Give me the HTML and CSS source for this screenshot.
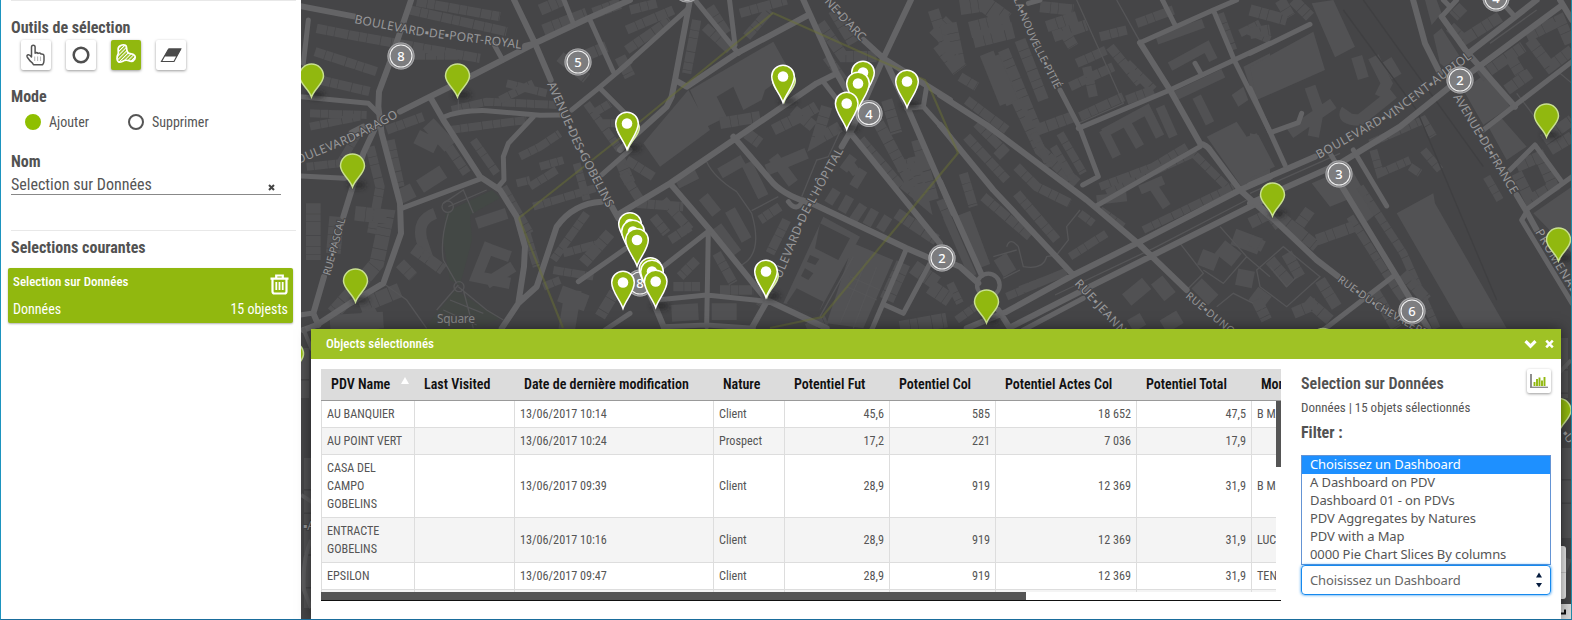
FILE: index.html
```
<!DOCTYPE html>
<html lang="fr">
<head>
<meta charset="utf-8">
<title>Selection sur Données</title>
<link rel="stylesheet" href="styles.css">
</head>
<body>
<div class="app">
  <aside class="side">
    <hr class="rule top">
    <h2 class="outils">Outils de sélection</h2>
    <div class="tools">
      <button class="tool"><svg width="30" height="30" viewBox="0 0 30 30"><path d="M10.500 17V7.200q0-1.900 1.800-1.900t1.800 1.900v6q1.600-1.300 3 .2 1.700-.9 2.900.6 3-.3 3 2.300v4.200q0 2.200-1.300 4.200H12.500q-.6-1.600-3.200-3.500l-3-4q-1-1.900.9-2.500 1.500-.3 3.300 2.300z" fill="#fff" stroke="#555" stroke-width="1.500" stroke-linejoin="round"/><path d="M13.700 16.500v4.500M16.600 16.500v4.500M19.500 16.500v4.500" stroke="#bbb" stroke-width="1.100"/></svg></button>
      <button class="tool"><svg width="30" height="30" viewBox="0 0 30 30"><circle cx="15" cy="15" r="7.300" fill="none" stroke="#4f4f4f" stroke-width="2.500"/></svg></button>
      <button class="tool on"><svg width="30" height="30" viewBox="0 0 30 30"><defs><pattern id="hatch" width="2.600" height="2.600" patternUnits="userSpaceOnUse" patternTransform="rotate(45)"><rect width="1.100" height="2.600" fill="#fff"/></pattern></defs><path d="M11 5q4.500-1 4.600 3 .2 5.300 3.700 5.700 6.500.9 4.500 5.300-2 3.400-6 1.700-3-1.200-6.500.8-4.900 2-5.300-2.500-.1-3 1.300-5.500 0-2-.2-4.500 0-3 3.900-4z" fill="url(#hatch)" stroke="#fff" stroke-width="1.700"/></svg></button>
      <button class="tool"><svg width="30" height="30" viewBox="0 0 30 30"><path d="M13 8.500h12.400l-4.300 7.500H8.400z" fill="#4a4a4a"/><path d="M12.600 9h12.100L18 21.500H5.500zM8.700 16h12.200" fill="none" stroke="#4a4a4a" stroke-width="1.200"/></svg></button>
    </div>
    <h2 class="mode">Mode</h2>
    <div class="radios"><span class="dot full"></span><span class="add">Ajouter</span><span class="dot"></span><span>Supprimer</span></div>
    <h2 class="nom">Nom</h2>
    <div class="field"><span>Selection sur Données</span><svg width="7" height="7" viewBox="0 0 7 7"><path d="M1 1l5 5M6 1L1 6" stroke="#444" stroke-width="2"/></svg></div>
    <hr class="rule">
    <h2 class="cour">Selections courantes</h2>
    <div class="card">
      <div class="line"><b>Selection sur Données</b><svg width="19" height="21" viewBox="0 0 19 21"><path d="M0.500 4.600h18M6.200 4V1.500h6.600V4M2.500 5v12.500q0 2 2 2h10q2 0 2-2V5" fill="none" stroke="#fff" stroke-width="2.200"/><path d="M6.300 8v8M9.500 8v8M12.700 8v8" stroke="#fff" stroke-width="1.800"/></svg></div>
      <div class="line"><span>Données</span><span>15 objests</span></div>
    </div>
  </aside>
  <main class="map">
    <svg class="canvas" width="1270" height="620" viewBox="301 0 1270 620">
      <defs>
        <g id="pin"><path d="M0 0C-3-8.500-12-13.500-12-21A12 12 0 0 1 12-21C12-13.500 3-8.500 0 0Z" fill="#91b80f" stroke="#c8df90" stroke-width="1.500"/></g>
        <g id="pinback"><path d="M0 0C-3-8.500-11.300-14-11.300-21A11.300 11.300 0 0 1 11.300-21C11.300-14 3-8.500 0 0Z" fill="#a4c83a" stroke="#d6e8a8" stroke-width="1.500"/></g>
        <g id="sel"><path d="M0 0C-3-9-11.300-17-11.300-26A11.300 11.300 0 0 1 11.300-26C11.300-17 3-9 0 0Z" fill="#91b80f" stroke="#fff" stroke-width="1.500"/><circle cy="-26" r="5.300" fill="#fff"/></g>
        <g id="cl"><circle r="13.500" fill="#808082" fill-opacity=".95"/><circle r="13" fill="none" stroke="#a5a5a7" stroke-width="1.200"/><circle r="11" fill="none" stroke="#f2f2f2" stroke-width="1.100"/></g>
        <filter id="soft" x="-50%" y="-50%" width="200%" height="200%"><feGaussianBlur stdDeviation="2.500"/></filter>
      </defs>
      <rect x="301" width="1271" height="620" fill="#454547"/>

      <!-- buildings, one group per map tile -->
      <g class="bld" transform="translate(300 0) scale(.33333)">
        <path class="w30 lots" d="M50 85L150 105L540 175M330 30L620 95M45 155L230 215M60 240L210 275M350 5L600 50M280 165L480 165"/>
        <path class="w40 lots" d="M780 170L860 235M800 190L920 140M720 30L790 0M880 40L960 10M960 170L990 230M730 90L860 40"/>
        <path class="w24 lots" d="M455 330L560 305L770 315M450 390L560 375L680 360M520 420L590 520M30 340L200 345M30 380L180 350M180 390L120 490L20 500"/>
        <path class="w30 lots" d="M260 390L370 350M270 420L300 560M210 440L240 560L215 700M415 395L500 520"/>
        <path class="w50" d="M385 370L450 440M350 410L410 440M360 560L430 515M330 600L310 560"/>
        <path class="w24 lots" d="M620 250L740 280M600 300L700 250M660 470L720 440L780 400M720 500L790 480M690 560L770 510M700 620L900 560M650 550L690 540M610 560L690 700"/>
        <path class="w50 lots" d="M40 610L40 780M110 650L100 760M165 640L260 650L230 790L180 850L100 940M180 920L300 870"/>
        <path class="w40" d="M405 640Q350 660 365 720L385 780M570 730L530 830L630 850M560 745L630 770M530 670L620 640M640 800L560 850"/>
        <path class="w60" d="M200 930L230 990M90 970L250 960M820 870L800 990M780 880L860 910"/>
        <path class="w24 lots" d="M860 310L960 450M880 340L930 310M900 370L985 370M830 490L860 600M860 640L760 780M790 760L900 730M760 810L880 830M730 860L780 840M680 700L710 800"/>
        <path class="w40 lots" d="M960 480L990 550M930 700L850 790M960 850L900 950M300 790L340 830M340 745L430 810"/>
      </g>
      <g class="bld" transform="translate(620 0) scale(.33333)">
        <path fill="#525254" stroke="none" class="solid" d="M210 270L460 125L510 215L435 270L425 300L370 330L340 260L290 290L320 350L260 380ZM70 430L205 270L270 390L120 500ZM610 650L720 710L600 930L490 910ZM700 730L820 780L730 985L620 970Z"/>
        <path class="hole" d="M600 670L690 715L655 780L585 745ZM530 865L610 905L590 950L500 910ZM570 765l28 12-12 18-25-10zM555 805l25 15-15 20-22-12z"/>
        <path class="w30 lots" d="M30 30L110 10M20 90L160 30M20 150L150 60M230 60L200 220M255 80L330 150M270 20L320 100M360 40L500 0M380 110L450 30M20 480L100 530M10 520L60 600"/>
        <path class="w40 lots" d="M600 70L670 170L770 170M640 30L700 130M300 370L420 350M460 390L540 350L590 320M520 330L580 380M380 400L420 430M620 320L590 420L660 380"/>
        <path class="w40" d="M440 510L560 460M460 470L520 550M300 520L370 480M380 490L430 590M250 590L290 640M330 630L380 720M290 680L350 760M170 550L230 520"/>
        <path class="w30 lots" d="M130 600L210 690M50 610L190 620M150 720L210 680M100 650L140 700M480 620L420 660M500 660L450 760M300 870L400 870M160 860L240 860M230 780L180 830M290 760L340 850"/>
        <path class="w60" d="M155 940L235 935M275 935L350 935"/>
        <path class="w30" d="M650 570L625 610M690 590L665 635M730 615L700 660M765 630L740 675M805 650L780 690M680 480L710 520M730 510L700 560M700 470L670 510"/>
        <path class="w40 lots" d="M720 420L840 560M760 340L900 600M800 300L830 400M830 500L930 480M850 550L910 600L880 470M890 420L940 600M830 640L950 720M940 30L990 180M940 110L990 60"/>
        <path class="w50 lots" d="M850 790L800 900M880 800L950 850M930 860L990 900M840 985L980 960"/>
        <path class="w30 lots" d="M450 870L420 920M560 985L620 960M670 240L620 170"/>
      </g>
      <g class="bld" transform="translate(940 0) scale(.33333)">
        <path class="w60 lots" d="M60 20L130 10L200 60M90 90L210 60M100 120L220 90M0 130L60 210M25 70L50 190"/>
        <path class="w50" d="M140 160L200 310M160 170L220 310"/>
        <path class="w40 lots" d="M190 150L290 390L400 350M240 120L310 300M230 300L300 450L410 550M320 80L410 50M300 20L400 30M370 90L400 140M340 110L440 75"/>
        <path class="w30 lots" d="M410 190L500 150M440 200L460 290M390 260L520 200M420 350L550 290M480 110L560 90M510 140L600 250M560 190L640 270M560 300L640 270M590 70L700 30"/>
        <path class="w30" d="M490 400L620 330L660 410M490 390L530 470M560 370L600 440M660 320L700 410M690 200L800 140L820 180M650 120L790 70M700 290L850 220M770 290L810 370M470 600L560 590M640 560L680 620M600 570L670 540"/>
        <path class="solid" d="M800 410L890 365L920 410L950 400L990 480V530L905 560ZM910 200L990 160V270L940 290ZM875 285l35-25 15 40-30 20z"/>
        <path class="w24 lots" d="M480 560L640 500L740 440M500 580L760 460L860 560M610 690L880 560M340 440L400 540M360 400L430 520M280 400L330 500M840 40L880 150M920 90L990 120M900 100L960 70"/>
        <path class="w30 lots" d="M80 410L200 540M110 370L200 460M60 230L110 260M80 300L200 390M230 500L290 560L390 610M230 580L350 720M170 470L200 440M130 590L270 710M70 520L100 620"/>
        <path class="w50" d="M180 770L210 820M70 640L130 800M560 900L620 850M650 840L690 890M770 850L820 900M580 950L600 985M670 980L720 950"/>
        <path class="w24 lots" d="M0 600L90 810M20 650L100 830M200 890L390 810M390 770L500 700M240 870L370 820M30 850L60 910M50 960L120 910M420 640L460 670M480 630L550 680"/>
        <path class="w60" d="M780 770L830 790M840 740L890 780M890 830L940 840M880 710L960 740M940 880L980 910"/>
      </g>
      <g class="bld" transform="translate(1250 0) scale(.33333)">
        <path class="w40 lots" d="M0 30L110 60M90 0L120 50M0 100L60 90M130 0L180 50"/>
        <path class="solid" d="M185 10L250 0L315 140L255 172ZM0 200L190 95L225 210L20 300ZM0 400L25 405L75 500L0 535ZM525 0L560 0L575 40L545 75ZM550 105L575 85L630 170L600 215L570 190ZM640 270L715 215L780 320L700 375ZM440 640L550 580L555 610L770 985H640ZM715 380L755 355L830 440L770 480ZM185 550L300 500L380 640L350 665L290 600L240 620ZM850 640L966 560V760Z"/>
        <path class="w40" d="M180 260L205 330L190 410M120 400L250 310M290 330Q270 360 330 360L430 280M320 170L340 235M370 170L410 250L390 290M410 180L440 230"/>
        <path class="w24 lots" d="M360 430L520 360L550 410M370 450L390 520L480 480M520 450L570 510M480 500L510 520M710 530L750 600M330 560L460 760L560 985M300 650L440 870L520 985"/>
        <path class="w40 lots" d="M600 80L640 120L750 50M640 20L610 50M690 230L820 140M770 270L840 220M780 170L810 220M830 110L930 60L960 130M840 120L900 200L966 150M800 500L870 470L910 560L840 600L800 520M880 420L966 360M900 450L966 410"/>
        <path class="w40 lots" d="M0 670L60 640L90 680M0 720L40 740M90 650L200 740M130 700L180 630M200 720L310 680M60 780L120 850M110 760L150 830M210 840L260 920M170 900L240 960M130 940L200 910M20 900L50 960M370 870L440 985M460 820L530 900"/>
      </g>
      <g class="bld" transform="translate(301 328)"><path class="lots" stroke-width="10" d="M3 20V70M8 130V280M1266 120V210M1262 10V70M1266 230L1258 250"/></g>

      <!-- parks and paths -->
      <path d="M446 212L492 190 500 198 470 215 472 240 460 285 450 280 443 240Z" fill="#434845"/>
      <path d="M455 290L500 318 480 328H425Z" fill="#434744"/>
      <g class="thin" transform="translate(300 0) scale(.33333)"><path d="M430 610L490 570L520 640M445 620L560 570M445 640Q420 720 430 780L470 850M475 855L410 930M475 860L560 930L610 960M490 870L520 985M450 900L550 940M430 930L530 975M250 850L320 900L380 985M475 290V330"/><circle cx="443" cy="620" r="17"/><circle cx="477" cy="860" r="15"/></g>
      <g class="thin" transform="translate(620 0) scale(.33333)"><path d="M260 485Q280 530 350 575L395 640Q430 760 365 795M395 632L475 590M660 395L625 470L590 480L545 590M700 770L600 950M740 780L660 970M770 800L700 985M690 830L780 870M680 860L770 900"/></g>
      <g class="thin" transform="translate(940 0) scale(.33333)"><path d="M410 0L550 310L415 370M530 0L600 125M345 885L640 745L920 600M720 730L790 820L740 870M840 680L920 770L850 850L790 810M920 770L990 830M940 910L880 880L830 920M160 770L230 750M190 835L240 810M200 740Q210 710 235 740L250 800Q310 810 320 770L350 765L385 720L380 680L420 630"/></g>
      <g class="thin" transform="translate(1250 0) scale(.33333)"><path d="M0 580L270 460M720 130L860 30M20 810L100 740L210 830L110 920L30 860ZM60 800L110 860L140 830M800 280L900 410M820 290L930 220L966 250"/><path class="rail" d="M340 0L700 500M280 30L500 330L740 900"/></g>

      <!-- streets -->
      <g class="road" transform="translate(300 0) scale(.33333)">
        <path d="M0 18L165 50M675 138L705 130M300 335L520 225L705 130L865 55L990 0M155 398L190 380M640-5L705 130L752 240M335-5L265 200L237 275L235 320L245 400L300 610L303 700L250 850L150 910L50 975L10 990M225 385L190 460L155 570L130 650M72 830L40 940L55 975M905 605Q820 610 770 680L710 860L655 910L605 985M930 610L955 655M390 290L430 360L540 530L600 570L650 650L675 740L672 800L655 910"/>
        <path class="mid" d="M0 290L205 310L235 340M0 528L135 535M25 60L10 190M0 945L35 940M430 352Q480 330 560 332L720 346L785 345M700 350L625 430L610 470L612 540L595 560M305 625L545 535M790-5L820 70M870 60L940 215M990 185L895 265L815 330M900 265L975 340M990 450L905 525M835 845L985 740M990 940L915 990M580 130L608 180"/>
      </g>
      <g class="road" transform="translate(620 0) scale(.33333)">
        <path d="M210 0L165 240L155 290L140 320L40 410L0 450M0 640L150 550L590 250L650 220M165 240L200 260L350 160L565 45M548-5L600 110L650 220L690 290M875-5L790 175L700 380L665 440M730 120L790 175L990 300M800 190L870 340L1000 640M680 385L960 730M340 410L460 550Q500 590 580 612L860 745L930 775M150 550L270 690L440 900L620 985M85 870L135 990M440 905L395 985"/>
        <path class="mid" d="M205 25L0 210M225 0L355 160M328-5L345 135M920 260L910 320L860 325M910 320L990 410M610 245L660 310M270 690L110 815L50 850M265 690L260 980M110 900L260 885L425 902M130 980L260 975L400 985M860 745L755 990M795 915L850 940L930 790M505 605Q530 640 550 600"/>
      </g>
      <g class="road" transform="translate(940 0) scale(.33333)">
        <path d="M0 285L140 375L440 600L600 735L740 870M0 375L160 570L400 825M0 545L125 825M0 775L60 800L115 850M80 985L200 935L400 825L600 725L900 570L990 530M215 980L450 860L640 765L940 615L990 590M175 930L210 985M600 128L690 270L780 430Q800 435 810 450L900 570L990 650"/>
        <path class="mid" d="M360 270L420 385L475 530L428 555M415 385L690 270L990 130M600 128L820 30L890 0M665-5L705 75M820 30L885 185L990 395M465 620L780 440M250 990L430 895M765 190L785 225M265 10L300 0"/>
        <circle cx="145" cy="855" r="34" stroke-width="13"/>
      </g>
      <g class="road" transform="translate(1250 0) scale(.33333)">
        <path d="M0 555L195 470M0 610L270 490L450 380L600 260L680 205L930 20M488-5L525 130L570 220M575 50L650 155L795 320M930 0L966 60M270 550L440 830L535 985M20 610L200 780L265 830M800 585L830 635L860 690M655 160L860 0"/>
        <path class="mid" d="M0 160L180 73M0 265L105 495M70 395L145 368L155 340M575 50L620 0M580 0L600 20M750 0L790 45M780 510L855 435L935 545M835 625L966 530M700 390L790 320L966 185M830 635L815 660L966 910M310 450L410 618M435 825L220 990M240 460L270 510"/>
      </g>
      <g class="edge"><path d="M303 328L312 350M301 495L312 502M311 540Q302 560 304 590L311 608M1571 360L1560 372"/></g>
      <path d="M519 218L615 142 773 13 883 62 925 80 932 93 958 153 822 317 770 328M519 218L563 328" fill="none" stroke="#6d7430" stroke-opacity=".45" stroke-width="2.200"/>

      <!-- street names -->
      <g class="names">
        <path id="n1" d="M354 23L415 35 523 49"/><text textLength="169"><textPath href="#n1">BOULEVARD▪DE▪PORT-ROYAL</textPath></text>
        <path id="n2" d="M298 164L356 140 402 115"/><text textLength="111"><textPath href="#n2">OULEVARD▪ARAGO</textPath></text>
        <path id="n3" d="M547 84L574 145 607 208"/><text textLength="138"><textPath href="#n3">AVENUE▪DES▪GOBELINS</textPath></text>
        <path id="n4" d="M330 276L346 217"/><text textLength="59" class="sm"><textPath href="#n4">RUE▪PASCAL</textPath></text>
        <path id="n5" d="M824 2L842 22 862 43"/><text textLength="54"><textPath href="#n5">NE▪D'ARC</textPath></text>
        <path id="n6" d="M781 279L807 217 844 150"/><text textLength="143"><textPath href="#n6">ULEVARD▪DE▪L'HÔPITAL</textPath></text>
        <path id="n7" d="M1012-4L1030 40 1057 93"/><text textLength="103" class="sm"><textPath href="#n7">▪LA▪NOUVELLE▪PITIÉ</textPath></text>
        <path id="n8" d="M1074 284L1127 341"/><text textLength="77"><textPath href="#n8">RUE▪JEANNE</textPath></text>
        <path id="n9" d="M1185 297L1232 336"/><text textLength="60" class="sm"><textPath href="#n9">RUE▪DUNO</textPath></text>
        <path id="n10" d="M1319 159L1395 116 1473 57"/><text textLength="184"><textPath href="#n10">BOULEVARD▪VINCENT▪AURIOL</textPath></text>
        <path id="n11" d="M1453 97L1485 150 1514 199"/><text textLength="114"><textPath href="#n11">AVENUE▪DE▪FRANCE</textPath></text>
        <path id="n12" d="M1337 281L1376 309 1427 338"/><text textLength="104" class="sm"><textPath href="#n12">RUE▪DU▪CHEVALERE</textPath></text>
        <path id="n13" d="M1535 232L1555 266 1580 306"/><text textLength="82"><textPath href="#n13">PROMENADE</textPath></text>
        <text x="437" y="323" class="park" textLength="38">Square</text>
        <text x="303" y="530">▪A</text>
        <text transform="translate(1561 434) rotate(52)">▪U</text>
      </g>

      <!-- shadows under the pins -->
      <g fill="#1c1c1e" opacity=".55" filter="url(#soft)"><ellipse cx="316" cy="95" rx="9" ry="4"/><ellipse cx="462" cy="95" rx="9" ry="4"/><ellipse cx="357" cy="185" rx="9" ry="4"/><ellipse cx="360" cy="300" rx="9" ry="4"/><ellipse cx="991" cy="320" rx="9" ry="4"/><ellipse cx="1277" cy="214" rx="9" ry="4"/><ellipse cx="1551" cy="135" rx="9" ry="4"/><ellipse cx="1563" cy="258" rx="9" ry="4"/><ellipse cx="632" cy="148" rx="9" ry="4"/><ellipse cx="788" cy="101" rx="9" ry="4"/><ellipse cx="911" cy="105" rx="9" ry="4"/><ellipse cx="850" cy="128" rx="9" ry="4"/><ellipse cx="771" cy="296" rx="9" ry="4"/><ellipse cx="660" cy="306" rx="9" ry="4"/></g>
      <g>
        <use href="#pin" x="311.500" y="97"/><use href="#pin" x="457.500" y="97"/><use href="#pin" x="352.500" y="187"/><use href="#pin" x="355.500" y="302"/><use href="#pin" x="986.500" y="323"/><use href="#pin" x="1272.500" y="216"/><use href="#pin" x="1546.500" y="137"/><use href="#pin" x="1558.500" y="261"/><use href="#pin" x="291.500" y="375"/><use href="#pin" x="1559" y="431.500"/><use href="#pin" x="1323" y="361.500"/>
      </g>
      <g class="count">
        <use href="#cl" x="401" y="56"/><text x="401" y="61">8</text>
        <use href="#cl" x="578" y="62"/><text x="578" y="67">5</text>
        <use href="#cl" x="869" y="113.500"/><text x="869" y="118.500">4</text>
        <use href="#cl" x="942" y="258"/><text x="942" y="263">2</text>
        <use href="#cl" x="1460" y="80"/><text x="1460" y="85">2</text>
        <use href="#cl" x="1339" y="174"/><text x="1339" y="179">3</text>
        <use href="#cl" x="1412" y="311"/><text x="1412" y="316">6</text>
        <use href="#cl" x="640" y="283"/><text x="640" y="288">8</text>
        <use href="#cl" x="687" y="-11"/>
        <use href="#cl" x="1496" y="-2"/><text x="1496" y="3">4</text>
      </g>
      <g>
        <use href="#pinback" x="628" y="149"/><use href="#sel" x="627" y="149.500"/>
        <use href="#pinback" x="784" y="102"/><use href="#sel" x="783" y="102.500"/>
        <use href="#sel" x="863" y="98.500"/><use href="#sel" x="858" y="109.500"/><use href="#sel" x="846.700" y="129.500"/><use href="#sel" x="907" y="107.500"/>
        <use href="#sel" x="630" y="250"/><use href="#sel" x="633" y="257.500"/><use href="#sel" x="637" y="266"/>
        <use href="#sel" x="650.500" y="295"/><use href="#sel" x="652" y="297.500"/><use href="#sel" x="655.700" y="307.500"/><use href="#sel" x="623" y="308.500"/>
        <use href="#pinback" x="767" y="297"/><use href="#sel" x="766" y="297.500"/>
      </g>
      <path d="M1555 546H1563Q1566 546 1566 549V596Q1566 599 1563 599H1555Z" fill="#e9e9e9"/><path d="M1560 572.500H1566" stroke="#ccc"/>
      <rect x="1555" y="604" width="16" height="15" fill="#d8d8d8"/><path d="M1561 613.500H1565V609.500" fill="none" stroke="#111" stroke-width="2"/>
    </svg>

    <section class="panel">
      <header class="bar"><span>Objects sélectionnés</span>
        <svg width="32" height="12" viewBox="0 0 32 12"><path d="M2.500 3.200l5 5 5-5" fill="none" stroke="#fff" stroke-width="3.200"/><path d="M23.200 2.700l6.600 6.600M29.800 2.700l-6.600 6.600" stroke="#fff" stroke-width="2.500"/></svg>
      </header>
      <div class="body">
        <div class="grid">
          <div class="head row"><span>PDV Name<i></i></span><span>Last Visited</span><span>Date de dernière modification</span><span>Nature</span><span>Potentiel Fut</span><span>Potentiel Col</span><span>Potentiel Actes Col</span><span>Potentiel Total</span><span>Montant</span></div>
          <div class="rows">
            <div class="row"><span>AU BANQUIER</span><span></span><span>13/06/2017 10:14</span><span>Client</span><span>45,6</span><span>585</span><span>18 652</span><span>47,5</span><span>B MA</span></div>
            <div class="row odd"><span>AU POINT VERT</span><span></span><span>13/06/2017 10:24</span><span>Prospect</span><span>17,2</span><span>221</span><span>7 036</span><span>17,9</span><span></span></div>
            <div class="row"><span>CASA DEL CAMPO GOBELINS</span><span></span><span>13/06/2017 09:39</span><span>Client</span><span>28,9</span><span>919</span><span>12 369</span><span>31,9</span><span>B MA</span></div>
            <div class="row odd"><span>ENTRACTE GOBELINS</span><span></span><span>13/06/2017 10:16</span><span>Client</span><span>28,9</span><span>919</span><span>12 369</span><span>31,9</span><span>LUC</span></div>
            <div class="row"><span>EPSILON</span><span></span><span>13/06/2017 09:47</span><span>Client</span><span>28,9</span><span>919</span><span>12 369</span><span>31,9</span><span>TEN</span></div>
            <div class="row odd"><span></span><span></span><span></span><span></span><span></span><span></span><span></span><span></span><span></span></div>
            <div class="vbar"></div>
          </div>
          <div class="hbar"><div></div></div>
        </div>
        <div class="info">
          <div class="ttl"><h3>Selection sur Données</h3>
            <button class="chart"><svg width="18" height="15" viewBox="0 0 18 15"><path d="M1 0v14" stroke="#444" stroke-width="1.200"/><path d="M1 13.300h17" stroke="#888" stroke-width="1.300"/><path d="M4.500 12V8M7 12V5M9.500 12V3.500M12 12V6.500M14.500 12V3" stroke="#91b80f" stroke-width="1.900"/></svg></button>
          </div>
          <p class="sub">Données | 15 objets sélectionnés</p>
          <h3 class="flt">Filter :</h3>
          <ul class="opts"><li class="cur">Choisissez un Dashboard</li><li>A Dashboard on PDV</li><li>Dashboard 01 - on PDVs</li><li>PDV Aggregates by Natures</li><li>PDV with a Map</li><li>0000 Pie Chart Slices By columns</li></ul>
          <div class="select"><span>Choisissez un Dashboard</span><svg width="6" height="16" viewBox="0 0 6 16"><path d="M3 0.500L6 5.500H0zM3 15.500L0 11H6z" fill="#061c3f"/></svg></div>
        </div>
      </div>
    </section>
  </main>
</div>
</body>
</html>
```
FILE: styles.css
```
*{box-sizing:border-box}
body{margin:0;font-family:"Roboto Condensed",Roboto,sans-serif;color:#555;background:#fff}
h2,h3,p,ul{margin:0;padding:0}
button{padding:0;border:0;font:inherit}
.app{display:flex;width:1572px;height:620px;overflow:hidden;border-left:1px solid #1d94bf;border-bottom:1px solid #1a6d9c;border-right:1px solid #1f8aa6}
.side{width:300px;flex:none;padding:0 0 0 10px;display:flex;flex-direction:column;z-index:1}
.rule{margin:0 5px 0 0;border:0;border-top:1px solid #e8e8e8;height:1px;flex:none}
h2{font-size:16px;font-weight:700;line-height:20px;color:#525252}
.outils{margin-top:17px}
.tools{display:flex;gap:15px;padding:2px 0 0 10px}
.tool{width:30px;height:30px;border-radius:2px;background:#fff;box-shadow:0 1px 3px rgba(0,0,0,.4)}
.tool svg{display:block}
.tool.on{background:#91b80f}
.mode{margin-top:17px}
.radios{display:flex;align-items:center;height:16px;margin:7px 0 0 14px;font-size:14px}
.dot{width:16px;height:16px;border:2px solid #555;border-radius:50%;margin-right:8px}
.dot.full{border-color:#8fbf00;background:#8fbf00}
.add{width:79px}
.nom{margin-top:22px}
.field{width:270px;height:23px;border-bottom:1px solid #888;display:flex;justify-content:space-between;align-items:center;font-size:16px;line-height:20px;padding:3px 6px 0 0}
.field svg{margin-top:5px}
.field+.rule{margin-top:35px}
.cour{margin-top:7px}
.card{width:285px;height:55px;margin:10px 0 0 -3px;padding:5px 5px 0;background:#91b80f;border-radius:2px;box-shadow:0 1px 2px rgba(0,0,0,.3);color:#fff;font-size:14px}
.line{display:flex;justify-content:space-between;align-items:center;height:21px;line-height:20px}
.line b{font-size:13px;font-weight:500;margin-top:-3px}
.line+.line{margin-top:4px}
.line svg{margin-right:-1px;margin-top:2px}
.map{position:relative;flex:1;background:#454547}
.canvas{display:block}
.bld path{fill:none;stroke:#515153}
.bld .solid{fill:#525254;stroke:none}
.bld .hole{fill:#454547;stroke:none}
.w24{stroke-width:24}.w30{stroke-width:28}.w40{stroke-width:34}.w50{stroke-width:44}.w60{stroke-width:50}
.lots{stroke-dasharray:31 1.500 22 1.500 40 2}
.thin path,.thin circle{fill:none;stroke:#555557;stroke-width:4}
.thin .rail{stroke:#3f3f41}
.road path,.road circle{fill:none;stroke:#646466;stroke-linejoin:round;stroke-linecap:round}
.road path{stroke-width:18}
.road path.mid{stroke-width:15}
.edge path{fill:none;stroke:#5c5c5e;stroke-width:4}
.names{font:12px "Noto Sans",sans-serif;fill:#979799;stroke:#454547;stroke-width:2px;paint-order:stroke}
.names path{fill:none;stroke:none}
.names .sm{font-size:10.500px}
.names .park{fill:#858786;font-size:12px}
.count{font:500 13px "Noto Sans",sans-serif;text-anchor:middle;fill:#fff}
.panel{position:absolute;left:10px;top:329px;width:1250px;height:290px;background:#fff;box-shadow:0 0 12px rgba(0,0,0,.5)}
.bar{height:30px;padding:0 6px 2px 15px;background:#9fc225;color:#fff;display:flex;justify-content:space-between;align-items:center;font-size:13px;font-weight:500}
.bar svg{margin-top:2px}
.body{display:flex;gap:20px;padding:10px 10px 0}
.grid{width:960px;flex:none;overflow:hidden}
.row{display:grid;grid-template-columns:94px 100px 199px 71px 105px 106px 141px 115px 90px;font-size:12.200px;line-height:18px;background:#fff}
.row span{padding:4px 5px 4px 6px;border-right:1px solid #ddd;border-bottom:1px solid #ddd;display:flex;align-items:center;min-width:0}
.row span:nth-child(n+3){padding-left:5px}
.row span:nth-child(n+5):nth-child(-n+8){justify-content:flex-end}
.row span:first-child{border-left:1px solid #ddd;padding-left:5px}
.odd{background:#f4f4f4}
.head.row{width:1021px;height:32px;background:#dcdcdc;font-size:14px;font-weight:600;color:#111;border-bottom:1px solid #999}
.head.row span,.head.row span:nth-child(n){border:0;padding:0 0 1px 9px;justify-content:flex-start}
.head.row span:first-child{padding-left:10px}
.head i{margin:-7px 0 0 11px;border:4px solid transparent;border-top:0;border-bottom:7px solid #fff}
.rows{position:relative;width:960px;height:191px;overflow:hidden}
.rows .row{width:955px;overflow:hidden}
.rows .row:nth-child(6){height:27px}
.vbar{position:absolute;right:0;top:0;width:5px;height:66px;background:#555}
.hbar{height:9px;border-bottom:1px solid #111}
.hbar div{width:705px;height:8px;background:#555}
.info{width:250px}
.ttl{display:flex;justify-content:space-between;height:25px}
h3{font-size:16px;font-weight:700;line-height:20px;color:#525252}
.ttl h3{padding-top:5px;font-weight:600}
.chart{width:24px;height:24px;background:#fff;border-radius:2px;box-shadow:0 1px 3px rgba(0,0,0,.4);display:flex;align-items:center;justify-content:center}
.sub{font-size:13px;line-height:18px;margin-top:5px}
.flt{margin-top:6px}
.opts{list-style:none;margin-top:12px;height:110px;border:1px solid #6494d4;font:13px/18px "Noto Sans",sans-serif;letter-spacing:-.1px}
.opts li{height:18px;padding-left:8px;line-height:16px}
.opts .cur{background:#1e90ff;color:#fff}
.select{height:30px;border:1px solid #1589ee;border-radius:4px;box-shadow:0 0 3px #1589ee;display:flex;align-items:center;justify-content:space-between;padding:0 8px;font:13px "Noto Sans",sans-serif;letter-spacing:-.1px;color:#666}
```
